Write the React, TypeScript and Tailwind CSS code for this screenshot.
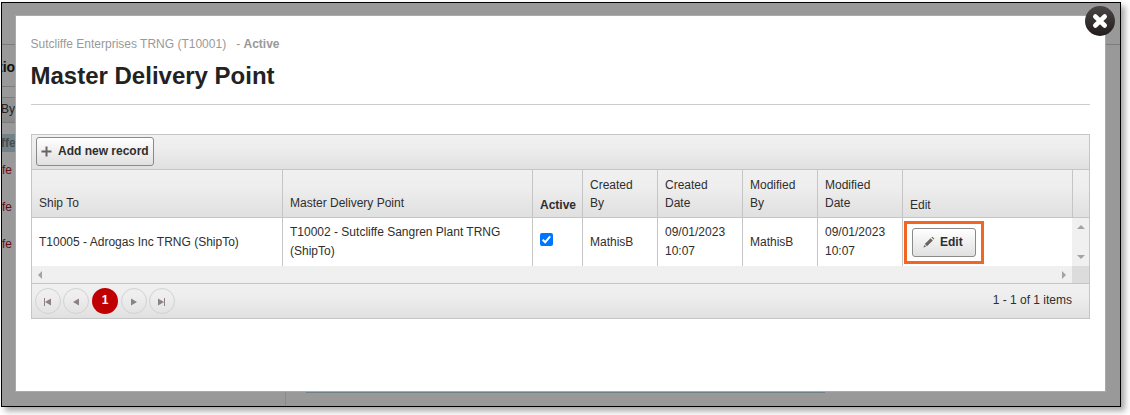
import type { ReactNode } from 'react';
import clsx from 'clsx';

const bar = 'bg-[linear-gradient(#f0f0f0_0%,#eeeeee_35%,#e0e0e0_100%)]';

const columns = [
  { label: 'Ship To', width: 'w-[251px]', value: 'T10005 - Adrogas Inc TRNG (ShipTo)' },
  { label: 'Master Delivery Point', width: 'w-[250px]', value: 'T10002 - Sutcliffe Sangren Plant TRNG (ShipTo)' },
  { label: 'Active', width: 'w-[50px]', low: true, bold: true, value: 'checkbox' },
  { label: 'Created By', width: 'w-[75px]', value: 'MathisB' },
  { label: 'Created Date', width: 'w-[85px]', value: '09/01/2023 10:07' },
  { label: 'Modified By', width: 'w-[75px]', value: 'MathisB' },
  { label: 'Modified Date', width: 'w-[85px]', value: '09/01/2023 10:07' },
  { label: 'Edit', width: 'w-[170px]', low: true, value: 'edit' }
];

function Button({ className, children }: { className: string; children: ReactNode }) {
  return (
    <button
      className={clsx(
        'flex h-[29px] items-center rounded-[3px] border border-[#8a8a8a] bg-[linear-gradient(#ffffff,#e0e0e0)] text-[12px] font-bold whitespace-nowrap text-[#2e2e2e]',
        className
      )}
    >
      {children}
    </button>
  );
}

function PencilIcon() {
  return (
    <svg width="12" height="12" viewBox="0 0 12 12">
      <path
        d="M0.5 11.5 L1.3 8.9 L3.1 10.7 Z M1.8 8 L7.6 2.2 L9.8 4.4 L4 10.2 Z M8.4 1.5 L9.3 0.7 L11.4 2.8 L10.6 3.6 Z"
        fill="#6b6361"
      />
    </svg>
  );
}

function Cell({ value }: { value: string }) {
  if (value === 'checkbox') {
    return (
      <svg width="13" height="13" viewBox="0 0 13 13" className="-mt-[5px]">
        <rect width="13" height="13" rx="2" fill="#0075ff" />
        <path d="M2.7 6.7 L5.2 9.2 L10.2 3.4" fill="none" stroke="#fff" strokeWidth="2" />
      </svg>
    );
  }
  if (value === 'edit') {
    return (
      <div className="-ml-1.5 flex h-[43px] w-20 shrink-0 items-center border-3 border-[#f26522] pl-[5px]">
        <Button className="w-16 gap-[5px] pl-[10px]">
          <PencilIcon />
          Edit
        </Button>
      </div>
    );
  }
  return <span>{value}</span>;
}

function Arrow({ d, className }: { d: string; className?: string }) {
  return (
    <svg width="10" height="10" viewBox="0 0 10 10" className={className}>
      <path d={d} fill="currentColor" />
    </svg>
  );
}

const pager = [
  { id: 'first', d: 'M1 1h1v8h-1z M8 1.5v7l-6-3.5z' },
  { id: 'prev', d: 'M8 1.5v7l-6-3.5z' },
  { id: 'page', d: '' },
  { id: 'next', d: 'M2 1.5v7l6-3.5z' },
  { id: 'last', d: 'M1 1.5v7l6-3.5z M7 1h1v8h-1z' }
];

function Grid() {
  return (
    <div className="mt-[29px] h-[185px] w-[1059px] border border-[#c5c5c5]">
      <div className={clsx('flex h-[35px] items-start border-b border-[#c5c5c5] pt-0.5 pl-1', bar)}>
        <Button className="w-[118px] gap-[6px] pb-0.5 pl-1">
          <svg width="11" height="11" viewBox="0 0 11 11" className="mt-0.5">
            <path d="M4.5 0.5h2v4h4v2h-4v4h-2v-4h-4v-2h4z" fill="#6b6361" />
          </svg>
          Add new record
        </Button>
      </div>

      <div className={clsx('flex h-12 border-b border-[#c5c5c5]', bar)}>
        {columns.map((col) => (
          <div
            key={col.label}
            className={clsx(
              'flex shrink-0 items-end border-r border-[#c5c5c5] pl-[7px] leading-[18px]',
              col.width,
              col.low ? 'pb-[3px]' : 'pb-[5px]',
              col.bold && 'font-bold',
              col.width === 'w-[75px]' || col.width === 'w-[85px]' ? 'pr-5' : ''
            )}
          >
            {col.label}
          </div>
        ))}
      </div>

      <div className="flex h-12">
        {columns.map((col) => (
          <div
            key={col.label}
            className={clsx(
              'flex shrink-0 items-center pl-[7px] leading-[19px]',
              col.value === 'edit' ? 'w-[169px]' : 'border-r border-[#c5c5c5]',
              col.value !== 'edit' && col.width,
              col.width === 'w-[85px]' && 'pr-3'
            )}
          >
            <Cell value={col.value} />
          </div>
        ))}
        <div className="flex grow flex-col items-center justify-between bg-[#f0f0f0] pt-1 pb-1 text-[#a3a3a3]">
          <Arrow d="M1 7h8l-4-4z" />
          <Arrow d="M1 3h8l-4 4z" />
        </div>
      </div>

      <div className="flex h-[18px] border-b border-[#c5c5c5] bg-[#f0f0f0] text-[#a3a3a3]">
        <div className="flex w-[1040px] items-center justify-between px-[3px]">
          <Arrow d="M7 1v8l-4-4z" />
          <Arrow d="M3 1v8l4-4z" />
        </div>
        <div className="grow bg-[#dcdcdc]" />
      </div>

      <div className={clsx('flex h-[34px] items-center pr-[17px] pl-[3px]', bar)}>
        {pager.map((item) =>
          item.id === 'page' ? (
            <div key={item.id} className="mr-[3px] ml-px flex size-[26px] items-center justify-center rounded-full bg-[#c00000] pb-0.5 font-bold text-white">
              1
            </div>
          ) : (
            <div key={item.id} className="mr-0.5 flex size-[26px] items-center justify-center rounded-full border border-[#d2d2d2] text-[#8c8280]">
              <Arrow d={item.d} className="mt-0.5" />
            </div>
          )
        )}
        <span className="ml-auto pb-0.5">1 - 1 of 1 items</span>
      </div>
    </div>
  );
}

/* Dimmed page that stays visible around the dialog */
function Backdrop() {
  return (
    <div className="flex h-full flex-col overflow-hidden bg-[#999999] leading-[18px]">
      <div className="h-[42px] shrink-0 border-b border-[#7c7c7c]" />
      <div className="flex w-[284px] grow flex-col">
        <div className="flex h-[41px] shrink-0 items-center pt-[3px] text-[14px] font-bold text-[#111]">
          <span className="-ml-1">tio</span>
        </div>
        <div className="h-[11px] shrink-0 border-t border-[#7c7c7c]" />
        <div className="flex h-[26px] shrink-0 items-center border-y border-[#7c7c7c] bg-[linear-gradient(#949494,#898989)] pb-0.5 text-[#222]">
          <span className="-ml-px">By</span>
        </div>
        <div className="mt-[11px] flex h-[18px] shrink-0 items-center bg-[#718288] font-bold text-[#4c4c4c]">
          <span className="-ml-px">ffe</span>
        </div>
        <div className="flex shrink-0 flex-col gap-[19px] pt-[9px] text-[#6a0c12]">
          <span>fe</span>
          <span>fe</span>
          <span>fe</span>
        </div>
      </div>
      <div className="flex h-[15px] shrink-0">
        <div className="w-[284px] border-r border-[#8b8b8b]" />
        <div className="mt-px ml-5 w-[519px] border-t border-[#6d8186]" />
      </div>
    </div>
  );
}

export default function App() {
  return (
    <div className="h-[415px] w-[1130px] overflow-hidden bg-white pt-0.5 pl-px font-['Liberation_Sans',Arial,sans-serif] text-[12px] text-[#2e2e2e]">
      <div className="relative h-[405px] w-[1120px] border border-black shadow-[4px_4px_6px_rgba(0,0,0,0.35)]">
        <Backdrop />

        <div className="absolute top-3 left-[13px] h-[377px] w-[1091px] border border-[#aaaaaa] bg-white pt-[19px] pl-[15px]">
          <p className="-ml-[0.5px] flex h-[18px] items-center text-[#999999]">
            Sutcliffe Enterprises TRNG (T10001)
            <span className="ml-[10px]">-&nbsp;</span>
            <b>Active</b>
          </p>
          <h1 className="mt-[8px] h-[44px] w-[1059px] border-b border-[#cccccc] text-[24px] leading-[30px] font-bold text-[#222]">
            <span className="-ml-[0.5px]">Master Delivery Point</span>
          </h1>
          <Grid />
        </div>

        <svg width="32" height="32" viewBox="0 0 32 32" className="absolute top-[2px] left-[1082px]">
          <defs>
            <linearGradient id="close" x1="0" y1="0" x2="0" y2="1">
              <stop offset="0" stopColor="#4a4646" />
              <stop offset="1" stopColor="#231d1c" />
            </linearGradient>
          </defs>
          <circle cx="16" cy="16" r="15" fill="url(#close)" />
          <path d="M11.3 11.5 L20.7 20.5 M20.7 11.5 L11.3 20.5" stroke="#fff" strokeWidth="4.6" strokeLinecap="round" />
        </svg>
      </div>
    </div>
  );
}
